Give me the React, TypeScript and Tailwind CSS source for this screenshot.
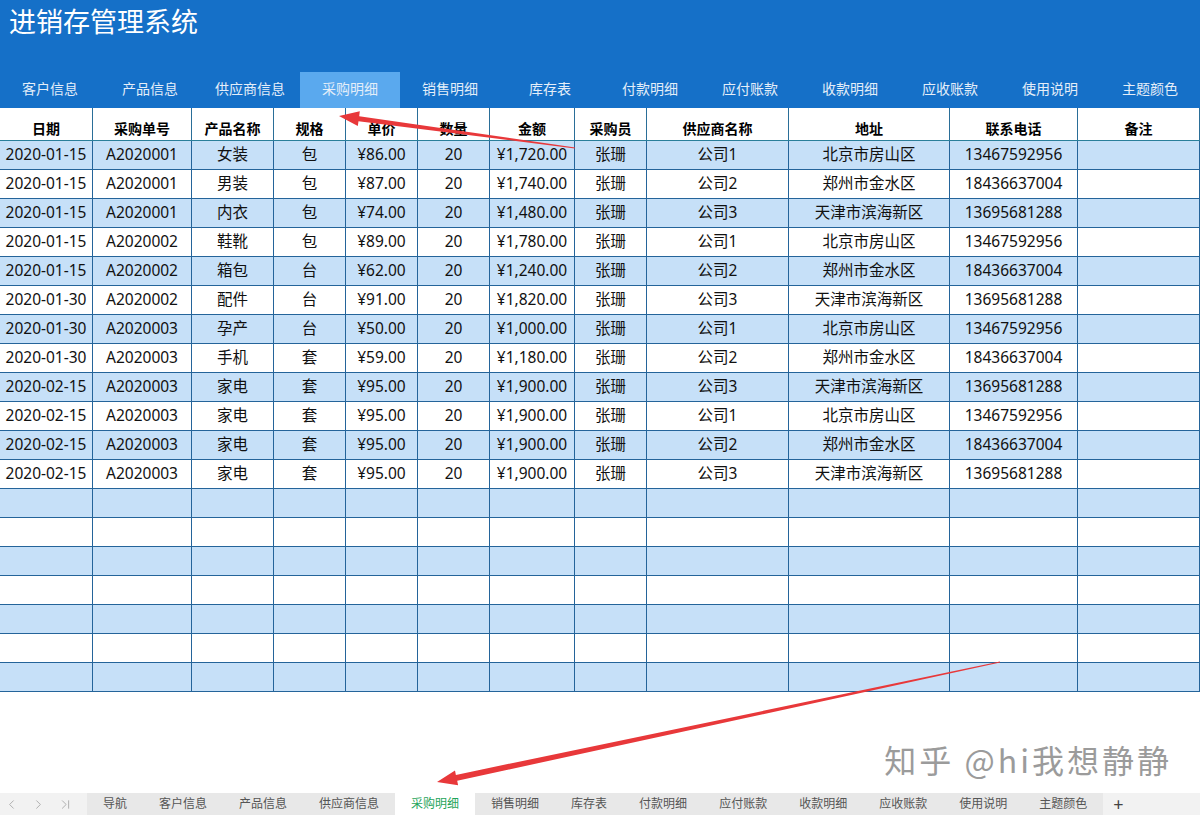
import { ChevronLeft, ChevronRight, ChevronLast } from 'lucide-react'

const navTabs = ['客户信息', '产品信息', '供应商信息', '采购明细', '销售明细', '库存表', '付款明细', '应付账款', '收款明细', '应收账款', '使用说明', '主题颜色']
const sheetTabs = ['导航', '客户信息', '产品信息', '供应商信息', '采购明细', '销售明细', '库存表', '付款明细', '应付账款', '收款明细', '应收账款', '使用说明', '主题颜色']
const headers = ['日期', '采购单号', '产品名称', '规格', '单价', '数量', '金额', '采购员', '供应商名称', '地址', '联系电话', '备注']

const products = ['女装', '男装', '内衣', '鞋靴', '箱包', '配件', '孕产', '手机', '家电', '家电', '家电', '家电']
const specs = ['包', '包', '包', '包', '台', '台', '台', '套', '套', '套', '套', '套']
const prices = [86, 87, 74, 89, 62, 91, 50, 59, 95, 95, 95, 95]
const dates = ['2020-01-15', '2020-01-15', '2020-01-15', '2020-01-15', '2020-01-15', '2020-01-30', '2020-01-30', '2020-01-30', '2020-02-15', '2020-02-15', '2020-02-15', '2020-02-15']
const orders = ['A2020001', 'A2020001', 'A2020001', 'A2020002', 'A2020002', 'A2020002', 'A2020003', 'A2020003', 'A2020003', 'A2020003', 'A2020003', 'A2020003']
const suppliers = [
    ['北京市房山区', '13467592956'],
    ['郑州市金水区', '18436637004'],
    ['天津市滨海新区', '13695681288'],
]

const money = (n: number) => '¥' + n.toLocaleString('en-US', { minimumFractionDigits: 2, maximumFractionDigits: 2 })

const rows: string[][] = dates.map((d, i) => [
    d,
    orders[i],
    products[i],
    specs[i],
    money(prices[i]),
    '20',
    money(prices[i] * 20),
    '张珊',
    '公司' + ((i % 3) + 1),
    suppliers[i % 3][0],
    suppliers[i % 3][1],
    '',
])
for (let i = 0; i < 7; i++) rows.push(Array(12).fill(''))

const gridCols = 'grid grid-cols-[93px_99px_82px_72px_72px_72px_85px_72px_142px_161px_128px_122px]'

// tapered red arrow, tail -> tip
const arrowPoints = (tx: number, ty: number, hx: number, hy: number, tailW: number, neckW: number, headW: number, headL: number) => {
    const len = Math.hypot(hx - tx, hy - ty)
    const dx = (hx - tx) / len
    const dy = (hy - ty) / len
    const nx = -dy
    const ny = dx
    const cx = hx - dx * headL
    const cy = hy - dy * headL
    const p = (x: number, y: number) => `${x.toFixed(1)},${y.toFixed(1)}`
    return [
        p(tx + nx * tailW / 2, ty + ny * tailW / 2),
        p(cx + nx * neckW / 2, cy + ny * neckW / 2),
        p(cx + nx * headW / 2, cy + ny * headW / 2),
        p(hx, hy),
        p(cx - nx * headW / 2, cy - ny * headW / 2),
        p(cx - nx * neckW / 2, cy - ny * neckW / 2),
        p(tx - nx * tailW / 2, ty - ny * tailW / 2),
    ].join(' ')
}

const App = () => {
    return (
        <div className="relative w-[1200px] h-[815px] bg-white flex flex-col overflow-hidden font-['Noto_Sans','Noto_Sans_CJK_SC',sans-serif]">
            {/* header */}
            <div className="bg-[#1570c8] h-[108px] flex flex-col shrink-0">
                <div className="h-[72px] pl-[9px] pt-[3px] text-white text-[27px] leading-[36px] font-['Noto_Sans_CJK_SC',sans-serif]">进销存管理系统</div>
                <div className="flex h-[36px]">
                    {navTabs.map((t, i) => (
                        <div key={t} className={`w-[100px] flex items-center justify-center pb-[3px] text-[14px] text-[#e4eef9] ${i === 3 ? 'bg-[#5aa9ee]' : ''}`}>{t}</div>
                    ))}
                </div>
            </div>

            {/* table */}
            <div className="w-[1200px] shrink-0">
                <div className={`${gridCols} h-[33px] border-b border-[#2a7f9a]`}>
                    {headers.map((h) => (
                        <div key={h} className="flex items-end justify-center pb-[1px] text-[14px] font-bold text-black border-r border-[#2a6e98]">{h}</div>
                    ))}
                </div>
                {rows.map((r, ri) => (
                    <div key={ri} className={`${gridCols} h-[29px] border-b border-[#24649a] ${ri % 2 === 0 ? 'bg-[#c6e0f8]' : 'bg-white'}`}>
                        {r.map((c, ci) => (
                            <div key={ci} className="flex items-center justify-center text-[15.5px] text-[#111] border-r border-[#24649a] whitespace-nowrap">{c}</div>
                        ))}
                    </div>
                ))}
            </div>

            <div className="flex-1 relative">
                <div className="absolute right-[28px] bottom-[10px] text-[32px] text-[#9b9b9b] tracking-[3px] font-['Noto_Sans_CJK_SC',sans-serif] [text-shadow:0_0_2px_#fff]">知乎 @hi我想静静</div>
            </div>

            {/* sheet tabs */}
            <div className="h-[22px] flex shrink-0 bg-[#e8e8e8] text-[12px] text-[#555]">
                <div className="w-[87px] flex items-center gap-[12px] pl-[4px] bg-[#f2f2f2] text-[#9a9a9a]">
                    <ChevronLeft size={15} strokeWidth={1.2} />
                    <ChevronRight size={15} strokeWidth={1.2} />
                    <ChevronLast size={15} strokeWidth={1.2} />
                </div>
                {sheetTabs.map((t, i) => (
                    <div key={t} className={`flex items-center px-[16px] ${i === 4 ? 'bg-white text-[#1ea45a] px-[14px]' : ''}`}>{t}</div>
                ))}
                <div className="flex-1 flex items-center pl-[10px] bg-[#f2f2f2] text-[#444] text-[18px] leading-none">+</div>
            </div>

            {/* annotation arrows */}
            <svg className="absolute left-0 top-0 pointer-events-none" width="1200" height="815">
                <polygon points={arrowPoints(575, 148, 339, 116, 1, 5, 15, 20)} fill="#e8383a" />
                <polygon points={arrowPoints(1000, 662, 437, 782, 1, 6, 15, 20)} fill="#e8383a" />
            </svg>
        </div>
    )
}

export default App
